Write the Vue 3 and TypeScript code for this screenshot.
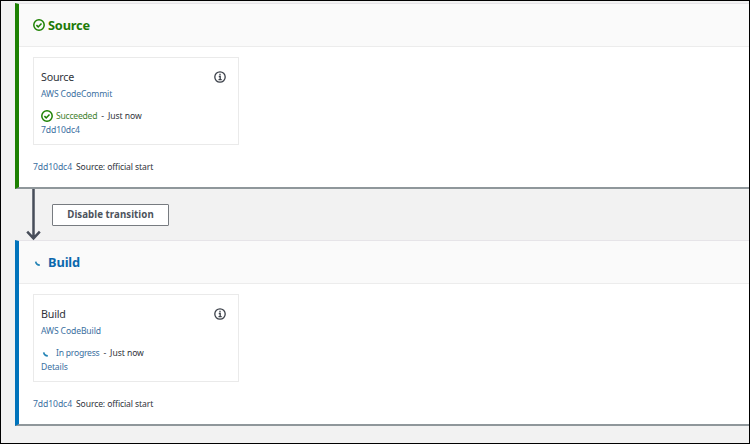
<script setup lang="ts">
interface Stage {
  id: string
  title: string
  provider: string
  status: string
  link: string
  done: boolean
}

const stages: Stage[] = [
  { id: 'source', title: 'Source', provider: 'AWS CodeCommit', status: 'Succeeded', link: '7dd10dc4', done: true },
  { id: 'build', title: 'Build', provider: 'AWS CodeBuild', status: 'In progress', link: 'Details', done: false },
]
</script>

<template>
  <main class="page">
    <template v-for="(stage, index) in stages" :key="stage.id">
      <div v-if="index > 0" class="transition">
        <svg class="arrow" width="16" height="52" viewBox="0 0 16 52">
          <path d="M7.5 0V49.5M1.2 42.7L7.5 49.4L13.8 42.7" fill="none" stroke="#474d59" stroke-width="2.5" />
        </svg>
        <button class="toggle" type="button"><span>Disable transition</span></button>
      </div>
      <section class="stage" :class="stage.id">
        <header class="head">
          <svg v-if="stage.done" class="icon" width="12" height="12" viewBox="0 0 12 12">
            <circle cx="6" cy="6" r="5.2" />
            <path d="M3.4 6.1L5.2 7.9L8.5 4.4" />
          </svg>
          <svg v-else class="icon spin" width="12" height="12" viewBox="0 0 12 12">
            <path d="M2.7 5.6C3 7.6 4.3 9 6.8 9.1" />
          </svg>
          <h2>{{ stage.title }}</h2>
        </header>
        <div class="body">
          <article class="card">
            <div class="top">
              <h3>{{ stage.title }}</h3>
              <svg class="info" width="12" height="12" viewBox="0 0 12 12">
                <circle cx="6" cy="6" r="5.2" />
                <path d="M6 2.7V4.2M4.8 5.5H6.2V8.6M4.5 8.6H7.7" />
              </svg>
            </div>
            <a class="provider">{{ stage.provider }}</a>
            <div class="status">
              <svg v-if="stage.done" class="icon" width="12" height="12" viewBox="0 0 12 12">
                <circle cx="6" cy="6" r="5.2" />
                <path d="M3.4 6.1L5.2 7.9L8.5 4.4" />
              </svg>
              <svg v-else class="icon spin" width="12" height="12" viewBox="0 0 12 12">
                <path d="M2.7 5.4C3 7.4 4.3 8.8 6.8 8.9" />
              </svg>
              <span class="state">{{ stage.status }}</span>
              <span class="dash">-</span>
              <span class="time">Just now</span>
            </div>
            <a class="link">{{ stage.link }}</a>
          </article>
          <p class="commit"><a class="hash">7dd10dc4</a><span class="message">Source: official start</span></p>
        </div>
      </section>
    </template>
  </main>
</template>

<style>
body {
  margin: 0;
}
</style>

<style scoped>
.page {
  box-sizing: border-box;
  width: 750px;
  height: 444px;
  padding: 2px 0 0 14px;
  border: 1px solid #000;
  background: #f2f2f2;
  color: #30343b;
  font: 8.6px/14px "Noto Sans", "Open Sans", sans-serif;
  letter-spacing: -0.12px;
  overflow: hidden;
}
.stage {
  box-sizing: border-box;
  height: 186px;
  border-left: 4px solid #1d8102;
  border-top: 1px solid #e6e4e8;
  border-bottom: 2px solid #8f979b;
  background: #fff;
}
.stage.build {
  border-left-color: #0073bb;
}
.head {
  box-sizing: border-box;
  display: flex;
  align-items: center;
  gap: 3px;
  height: 43px;
  padding: 0 0 0 14px;
  border-bottom: 1px solid #ececec;
  background: #fafafa;
}
h2, h3, p {
  margin: 0;
}
h2 {
  color: #1d7a08;
  font-size: 12.8px;
  font-weight: 700;
  line-height: 18px;
  letter-spacing: -0.18px;
}
.build h2 {
  color: #0b68ad;
  letter-spacing: -0.1px;
}
.icon, .info {
  display: block;
  flex: none;
  fill: none;
  stroke: #1d8102;
  stroke-width: 1.5;
}
.spin {
  stroke: #2383b5;
  stroke-width: 1.7;
}
.info {
  stroke: #3c414a;
  stroke-width: 1.3;
}
.body {
  padding: 10px 0 0 14px;
}
.card {
  box-sizing: border-box;
  width: 206px;
  height: 88px;
  padding: 10px 12px 0 7px;
  border: 1px solid #eaeaea;
}
.top {
  display: flex;
  align-items: center;
  justify-content: space-between;
  height: 18px;
}
h3 {
  font-size: 10.7px;
  font-weight: 400;
  letter-spacing: -0.2px;
}
a {
  color: #3b6f9f;
}
.provider, .link {
  display: block;
  width: max-content;
}
.provider {
  margin-top: 1px;
}
.status {
  display: flex;
  align-items: center;
  height: 14px;
  margin-top: 8px;
}
.state {
  margin-left: 3px;
  letter-spacing: -0.24px;
  color: #437f30;
}
.build .state {
  color: #3b6f9f;
}
.dash {
  margin: 0 4px;
}
.time {
  letter-spacing: -0.06px;
}
.commit {
  display: flex;
  gap: 4px;
  margin-top: 15px;
}
.hash {
  letter-spacing: -0.08px;
}
.message {
  letter-spacing: -0.12px;
}
.transition {
  display: flex;
  height: 51px;
  padding-left: 11px;
}
.arrow {
  position: relative;
  flex: none;
  z-index: 1;
}
.toggle {
  box-sizing: border-box;
  width: 117px;
  height: 22px;
  margin: 15px 0 0 10px;
  padding: 0;
  border: 1px solid #777b80;
  border-radius: 1px;
  background: #fff;
  color: #4d535c;
  font: 700 9.7px/18px "Noto Sans", "Open Sans", sans-serif;
  letter-spacing: 0.05px;
}
</style>
